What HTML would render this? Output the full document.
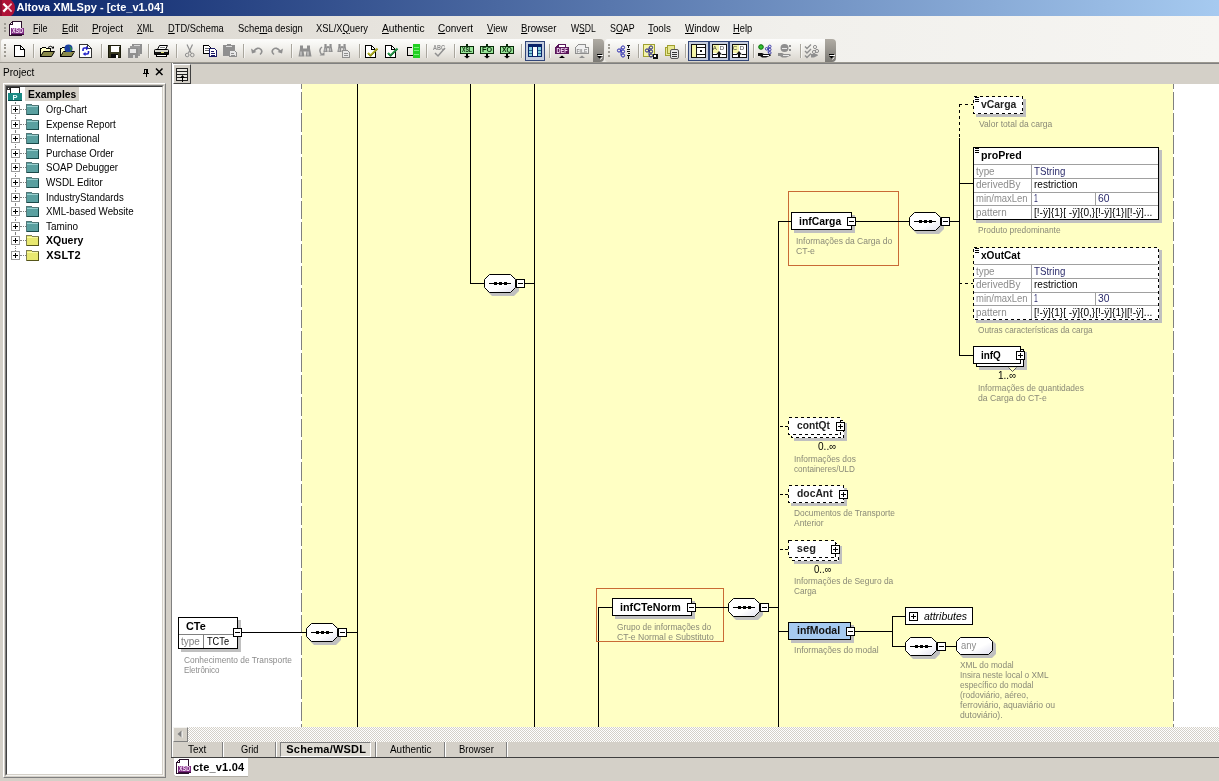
<!DOCTYPE html>
<html lang="en"><head><meta charset="utf-8"><title>Altova XMLSpy - [cte_v1.04]</title>
<style>
html,body{margin:0;padding:0}
body{width:1219px;height:781px;overflow:hidden;position:relative;background:#d4d0c8;font-family:"Liberation Sans",sans-serif;font-size:11px}
#app{position:absolute;left:0;top:0;width:1219px;height:781px;overflow:hidden;will-change:transform}
#app div,#app svg{position:absolute}
.t{position:absolute;white-space:nowrap;transform-origin:0 0}
u{text-decoration:underline;text-underline-offset:1px}
</style></head>
<body>
<div id="app">
<div style="left:0px;top:0px;width:1219px;height:16px;background:linear-gradient(to right,#0a246a 0%,#a6caf0 100%)"></div>
<div style="left:0px;top:16px;width:1219px;height:46px;background:linear-gradient(to right,#d4d0c8 0%,#e6e3dd 30%,#f1f0ec 65%,#f6f5f2 100%)"></div>
<div style="left:0px;top:62px;width:1219px;height:1px;background:#9a978f"></div>
<div style="left:171px;top:63px;width:1048px;height:1px;background:#808080"></div>
<div style="left:1px;top:39px;width:593px;height:23px;background:linear-gradient(to bottom,#fdfdfc 0%,#f3f2ee 35%,#d9d5cd 100%);border-radius:3px 0 0 3px"></div>
<div style="left:593px;top:39px;width:11px;height:23px;background:linear-gradient(to bottom,#b0aca4,#7c7a75);border-radius:0 4px 4px 0"></div>
<div style="left:605px;top:39px;width:221px;height:23px;background:linear-gradient(to bottom,#fdfdfc 0%,#f3f2ee 35%,#d9d5cd 100%);border-radius:3px 0 0 3px"></div>
<div style="left:825px;top:39px;width:11px;height:23px;background:linear-gradient(to bottom,#b0aca4,#7c7a75);border-radius:0 4px 4px 0"></div>
<div style="left:3.5px;top:22.8px;width:2px;height:2px;background:#9d9a92"></div>
<div style="left:3.5px;top:26.5px;width:2px;height:2px;background:#9d9a92"></div>
<div style="left:3.5px;top:30.2px;width:2px;height:2px;background:#9d9a92"></div>
<div style="left:3.5px;top:43.7px;width:2px;height:2px;background:#9d9a92"></div>
<div style="left:3.5px;top:47.4px;width:2px;height:2px;background:#9d9a92"></div>
<div style="left:3.5px;top:51.1px;width:2px;height:2px;background:#9d9a92"></div>
<div style="left:3.5px;top:54.8px;width:2px;height:2px;background:#9d9a92"></div>
<div style="left:608px;top:43.7px;width:2px;height:2px;background:#9d9a92"></div>
<div style="left:608px;top:47.4px;width:2px;height:2px;background:#9d9a92"></div>
<div style="left:608px;top:51.1px;width:2px;height:2px;background:#9d9a92"></div>
<div style="left:608px;top:54.8px;width:2px;height:2px;background:#9d9a92"></div>
<div style="left:33px;top:44px;width:1px;height:14px;background:#a9a69d"></div>
<div style="left:34px;top:45px;width:1px;height:13px;background:rgba(255,255,255,.6)"></div>
<div style="left:101px;top:44px;width:1px;height:14px;background:#a9a69d"></div>
<div style="left:102px;top:45px;width:1px;height:13px;background:rgba(255,255,255,.6)"></div>
<div style="left:148px;top:44px;width:1px;height:14px;background:#a9a69d"></div>
<div style="left:149px;top:45px;width:1px;height:13px;background:rgba(255,255,255,.6)"></div>
<div style="left:176px;top:44px;width:1px;height:14px;background:#a9a69d"></div>
<div style="left:177px;top:45px;width:1px;height:13px;background:rgba(255,255,255,.6)"></div>
<div style="left:243px;top:44px;width:1px;height:14px;background:#a9a69d"></div>
<div style="left:244px;top:45px;width:1px;height:13px;background:rgba(255,255,255,.6)"></div>
<div style="left:291px;top:44px;width:1px;height:14px;background:#a9a69d"></div>
<div style="left:292px;top:45px;width:1px;height:13px;background:rgba(255,255,255,.6)"></div>
<div style="left:359px;top:44px;width:1px;height:14px;background:#a9a69d"></div>
<div style="left:360px;top:45px;width:1px;height:13px;background:rgba(255,255,255,.6)"></div>
<div style="left:426px;top:44px;width:1px;height:14px;background:#a9a69d"></div>
<div style="left:427px;top:45px;width:1px;height:13px;background:rgba(255,255,255,.6)"></div>
<div style="left:454px;top:44px;width:1px;height:14px;background:#a9a69d"></div>
<div style="left:455px;top:45px;width:1px;height:13px;background:rgba(255,255,255,.6)"></div>
<div style="left:521px;top:44px;width:1px;height:14px;background:#a9a69d"></div>
<div style="left:522px;top:45px;width:1px;height:13px;background:rgba(255,255,255,.6)"></div>
<div style="left:549px;top:44px;width:1px;height:14px;background:#a9a69d"></div>
<div style="left:550px;top:45px;width:1px;height:13px;background:rgba(255,255,255,.6)"></div>
<div style="left:638px;top:44px;width:1px;height:14px;background:#a9a69d"></div>
<div style="left:639px;top:45px;width:1px;height:13px;background:rgba(255,255,255,.6)"></div>
<div style="left:685px;top:44px;width:1px;height:14px;background:#a9a69d"></div>
<div style="left:686px;top:45px;width:1px;height:13px;background:rgba(255,255,255,.6)"></div>
<div style="left:753px;top:44px;width:1px;height:14px;background:#a9a69d"></div>
<div style="left:754px;top:45px;width:1px;height:13px;background:rgba(255,255,255,.6)"></div>
<div style="left:800px;top:44px;width:1px;height:14px;background:#a9a69d"></div>
<div style="left:801px;top:45px;width:1px;height:13px;background:rgba(255,255,255,.6)"></div>
<div style="left:3px;top:83px;width:163px;height:695px;border:1px solid #fff;border-right-color:#808080;border-bottom-color:#808080;box-sizing:border-box"></div>
<div style="left:5px;top:85px;width:159px;height:691px;background:#fff;border:1px solid #808080;border-right-color:#f4f3f0;border-bottom-color:#f4f3f0;box-sizing:border-box"></div>
<div style="left:6px;top:86px;width:157px;height:689px;border:1px solid #404040;border-right-color:#d4d0c8;border-bottom-color:#d4d0c8;box-sizing:border-box"></div>
<div style="left:25px;top:87px;width:54px;height:14px;background:#d4d0c8"></div>
<div style="left:15px;top:102px;width:1px;height:14px;border-left:1px dotted #808080"></div>
<div style="left:20px;top:109px;width:6px;height:1px;border-top:1px dotted #808080"></div>
<div style="left:11px;top:105px;width:9px;height:9px;background:#fff;border:1px solid #9a9a9a;box-sizing:border-box"></div>
<div style="left:13px;top:109px;width:5px;height:1px;background:#000"></div>
<div style="left:15px;top:107px;width:1px;height:5px;background:#000"></div>
<div style="left:15px;top:117px;width:1px;height:14px;border-left:1px dotted #808080"></div>
<div style="left:20px;top:124px;width:6px;height:1px;border-top:1px dotted #808080"></div>
<div style="left:11px;top:120px;width:9px;height:9px;background:#fff;border:1px solid #9a9a9a;box-sizing:border-box"></div>
<div style="left:13px;top:124px;width:5px;height:1px;background:#000"></div>
<div style="left:15px;top:122px;width:1px;height:5px;background:#000"></div>
<div style="left:15px;top:131px;width:1px;height:14px;border-left:1px dotted #808080"></div>
<div style="left:20px;top:138px;width:6px;height:1px;border-top:1px dotted #808080"></div>
<div style="left:11px;top:134px;width:9px;height:9px;background:#fff;border:1px solid #9a9a9a;box-sizing:border-box"></div>
<div style="left:13px;top:138px;width:5px;height:1px;background:#000"></div>
<div style="left:15px;top:136px;width:1px;height:5px;background:#000"></div>
<div style="left:15px;top:146px;width:1px;height:14px;border-left:1px dotted #808080"></div>
<div style="left:20px;top:153px;width:6px;height:1px;border-top:1px dotted #808080"></div>
<div style="left:11px;top:149px;width:9px;height:9px;background:#fff;border:1px solid #9a9a9a;box-sizing:border-box"></div>
<div style="left:13px;top:153px;width:5px;height:1px;background:#000"></div>
<div style="left:15px;top:151px;width:1px;height:5px;background:#000"></div>
<div style="left:15px;top:160px;width:1px;height:14px;border-left:1px dotted #808080"></div>
<div style="left:20px;top:167px;width:6px;height:1px;border-top:1px dotted #808080"></div>
<div style="left:11px;top:163px;width:9px;height:9px;background:#fff;border:1px solid #9a9a9a;box-sizing:border-box"></div>
<div style="left:13px;top:167px;width:5px;height:1px;background:#000"></div>
<div style="left:15px;top:165px;width:1px;height:5px;background:#000"></div>
<div style="left:15px;top:175px;width:1px;height:14px;border-left:1px dotted #808080"></div>
<div style="left:20px;top:182px;width:6px;height:1px;border-top:1px dotted #808080"></div>
<div style="left:11px;top:178px;width:9px;height:9px;background:#fff;border:1px solid #9a9a9a;box-sizing:border-box"></div>
<div style="left:13px;top:182px;width:5px;height:1px;background:#000"></div>
<div style="left:15px;top:180px;width:1px;height:5px;background:#000"></div>
<div style="left:15px;top:190px;width:1px;height:14px;border-left:1px dotted #808080"></div>
<div style="left:20px;top:197px;width:6px;height:1px;border-top:1px dotted #808080"></div>
<div style="left:11px;top:193px;width:9px;height:9px;background:#fff;border:1px solid #9a9a9a;box-sizing:border-box"></div>
<div style="left:13px;top:197px;width:5px;height:1px;background:#000"></div>
<div style="left:15px;top:195px;width:1px;height:5px;background:#000"></div>
<div style="left:15px;top:204px;width:1px;height:14px;border-left:1px dotted #808080"></div>
<div style="left:20px;top:211px;width:6px;height:1px;border-top:1px dotted #808080"></div>
<div style="left:11px;top:207px;width:9px;height:9px;background:#fff;border:1px solid #9a9a9a;box-sizing:border-box"></div>
<div style="left:13px;top:211px;width:5px;height:1px;background:#000"></div>
<div style="left:15px;top:209px;width:1px;height:5px;background:#000"></div>
<div style="left:15px;top:219px;width:1px;height:14px;border-left:1px dotted #808080"></div>
<div style="left:20px;top:226px;width:6px;height:1px;border-top:1px dotted #808080"></div>
<div style="left:11px;top:222px;width:9px;height:9px;background:#fff;border:1px solid #9a9a9a;box-sizing:border-box"></div>
<div style="left:13px;top:226px;width:5px;height:1px;background:#000"></div>
<div style="left:15px;top:224px;width:1px;height:5px;background:#000"></div>
<div style="left:15px;top:233px;width:1px;height:14px;border-left:1px dotted #808080"></div>
<div style="left:20px;top:240px;width:6px;height:1px;border-top:1px dotted #808080"></div>
<div style="left:11px;top:236px;width:9px;height:9px;background:#fff;border:1px solid #9a9a9a;box-sizing:border-box"></div>
<div style="left:13px;top:240px;width:5px;height:1px;background:#000"></div>
<div style="left:15px;top:238px;width:1px;height:5px;background:#000"></div>
<div style="left:15px;top:248px;width:1px;height:7px;border-left:1px dotted #808080"></div>
<div style="left:20px;top:255px;width:6px;height:1px;border-top:1px dotted #808080"></div>
<div style="left:11px;top:251px;width:9px;height:9px;background:#fff;border:1px solid #9a9a9a;box-sizing:border-box"></div>
<div style="left:13px;top:255px;width:5px;height:1px;background:#000"></div>
<div style="left:15px;top:253px;width:1px;height:5px;background:#000"></div>
<div style="left:172px;top:84px;width:1047px;height:643px;background:#fff"></div>
<div style="left:171px;top:63px;width:1px;height:695px;background:#808080"></div>
<div style="left:172px;top:63px;width:1px;height:695px;background:#fff"></div>
<div style="left:173px;top:64px;width:18px;height:20px;background:#d4d0c8;border:1px solid #fff;border-right-color:#404040;border-bottom-color:#404040;box-sizing:border-box"></div>
<div style="left:173px;top:727px;width:1046px;height:15px;background:repeating-conic-gradient(#fff 0% 25%,#d4d0c8 0% 50%) 0 0/2px 2px"></div>
<div style="left:173px;top:727px;width:15px;height:15px;background:#d4d0c8;border:1px solid #f4f3f0;border-right-color:#808080;border-bottom-color:#808080;box-sizing:border-box"></div>
<div style="left:173px;top:742px;width:1046px;height:15px;background:#d4d0c8"></div>
<div style="left:171px;top:757px;width:1048px;height:1px;background:#404040"></div>
<div style="left:222px;top:742px;width:1px;height:15px;background:#808080"></div>
<div style="left:223px;top:742px;width:1px;height:15px;background:#fff"></div>
<div style="left:275px;top:742px;width:1px;height:15px;background:#808080"></div>
<div style="left:276px;top:742px;width:1px;height:15px;background:#fff"></div>
<div style="left:375px;top:742px;width:1px;height:15px;background:#808080"></div>
<div style="left:376px;top:742px;width:1px;height:15px;background:#fff"></div>
<div style="left:444px;top:742px;width:1px;height:15px;background:#808080"></div>
<div style="left:445px;top:742px;width:1px;height:15px;background:#fff"></div>
<div style="left:506px;top:742px;width:1px;height:15px;background:#808080"></div>
<div style="left:507px;top:742px;width:1px;height:15px;background:#fff"></div>
<div style="left:280px;top:742px;width:91px;height:15px;border:1px solid #808080;border-right-color:#fff;border-bottom-color:#fff;box-sizing:border-box;background:#dedbd4"></div>
<div style="left:174px;top:758px;width:74px;height:19px;background:#fff;border-radius:0 0 0 3px;border-bottom:1px solid #b0aca4;box-sizing:border-box"></div>
<div style="left:302px;top:84px;width:871px;height:643px;background:#ffffc4"></div>
<svg width="1219" height="781" viewBox="0 0 1219 781" style="left:0;top:0" shape-rendering="crispEdges"><defs><linearGradient id="og" x1="0" y1="0" x2="1" y2="1"><stop offset="0" stop-color="#fff"/><stop offset="0.6" stop-color="#fff"/><stop offset="1" stop-color="#e0e0ee"/></linearGradient></defs><line x1="301.5" y1="84" x2="301.5" y2="727" stroke="#808080" stroke-dasharray="18.8 3" stroke-dashoffset="-7.5"/><line x1="1173.5" y1="84" x2="1173.5" y2="727" stroke="#808080" stroke-dasharray="18.8 3" stroke-dashoffset="-7.5"/><rect x="357" y="84" width="1" height="643" fill="#000"/><rect x="470" y="84" width="1" height="200" fill="#000"/><rect x="534" y="84" width="1" height="643" fill="#000"/><rect x="598" y="607" width="1" height="120" fill="#000"/><rect x="778" y="221" width="1" height="506" fill="#000"/><rect x="959" y="138" width="1" height="218" fill="#000"/><line x1="959.5" y1="104" x2="959.5" y2="138" stroke="#000" stroke-dasharray="3 3" stroke-dashoffset="0"/><rect x="892" y="616" width="1" height="31" fill="#000"/><rect x="181" y="620" width="60" height="32" fill="#c0c0c0"/><rect x="178.5" y="617.5" width="59" height="31" fill="#fff" stroke="#000"/><rect x="179" y="634" width="58" height="1" fill="#808080"/><rect x="203" y="635" width="1" height="13" fill="#808080"/><rect x="238" y="632" width="68" height="1" fill="#000"/><rect x="233.5" y="628.5" width="8" height="8" fill="#fff" stroke="#000"/><rect x="235" y="632" width="5" height="1" fill="#000"/><polygon points="314,626 336,626 341,631 341,640 336,645 314,645 309,640 309,631" fill="#c0c0c0" shape-rendering="auto"/><polygon points="311.5,623.5 332.5,623.5 337.5,628.5 337.5,636.5 332.5,641.5 311.5,641.5 306.5,636.5 306.5,628.5" fill="url(#og)" stroke="#000" shape-rendering="geometricPrecision"/><rect x="311" y="632" width="22" height="1" fill="#000"/><rect x="316" y="631" width="3" height="3" fill="#000"/><rect x="321" y="631" width="3" height="3" fill="#000"/><rect x="326" y="631" width="3" height="3" fill="#000"/><rect x="338.5" y="628.5" width="8" height="8" fill="#fff" stroke="#000"/><rect x="340" y="632" width="5" height="1" fill="#000"/><rect x="347" y="632" width="10" height="1" fill="#000"/><rect x="470" y="283" width="14" height="1" fill="#000"/><polygon points="492,277 514,277 519,282 519,291 514,296 492,296 487,291 487,282" fill="#c0c0c0" shape-rendering="auto"/><polygon points="489.5,274.5 510.5,274.5 515.5,279.5 515.5,287.5 510.5,292.5 489.5,292.5 484.5,287.5 484.5,279.5" fill="url(#og)" stroke="#000" shape-rendering="geometricPrecision"/><rect x="489" y="283" width="22" height="1" fill="#000"/><rect x="494" y="282" width="3" height="3" fill="#000"/><rect x="499" y="282" width="3" height="3" fill="#000"/><rect x="504" y="282" width="3" height="3" fill="#000"/><rect x="516.5" y="279.5" width="8" height="8" fill="#fff" stroke="#000"/><rect x="518" y="283" width="5" height="1" fill="#000"/><rect x="525" y="283" width="9" height="1" fill="#000"/><rect x="596.5" y="588.5" width="127" height="53" fill="none" stroke="#c96a35"/><rect x="598" y="607" width="14" height="1" fill="#000"/><rect x="615" y="601" width="80" height="18" fill="#c0c0c0"/><rect x="612.5" y="598.5" width="79" height="17" fill="#fff" stroke="#000"/><rect x="692" y="607" width="36" height="1" fill="#000"/><rect x="687.5" y="603.5" width="8" height="8" fill="#fff" stroke="#000"/><rect x="689" y="607" width="5" height="1" fill="#000"/><polygon points="736,601 758,601 763,606 763,615 758,620 736,620 731,615 731,606" fill="#c0c0c0" shape-rendering="auto"/><polygon points="733.5,598.5 754.5,598.5 759.5,603.5 759.5,611.5 754.5,616.5 733.5,616.5 728.5,611.5 728.5,603.5" fill="url(#og)" stroke="#000" shape-rendering="geometricPrecision"/><rect x="733" y="607" width="22" height="1" fill="#000"/><rect x="738" y="606" width="3" height="3" fill="#000"/><rect x="743" y="606" width="3" height="3" fill="#000"/><rect x="748" y="606" width="3" height="3" fill="#000"/><rect x="760.5" y="603.5" width="8" height="8" fill="#fff" stroke="#000"/><rect x="762" y="607" width="5" height="1" fill="#000"/><rect x="769" y="607" width="9" height="1" fill="#000"/><rect x="788.5" y="191.5" width="110" height="74" fill="none" stroke="#c96a35"/><rect x="778" y="221" width="13" height="1" fill="#000"/><rect x="794" y="215" width="61" height="18" fill="#c0c0c0"/><rect x="791.5" y="212.5" width="60" height="17" fill="#fff" stroke="#000"/><rect x="852" y="221" width="57" height="1" fill="#000"/><rect x="847.5" y="217.5" width="8" height="8" fill="#fff" stroke="#000"/><rect x="849" y="221" width="5" height="1" fill="#000"/><polygon points="917,215 939,215 944,220 944,229 939,234 917,234 912,229 912,220" fill="#c0c0c0" shape-rendering="auto"/><polygon points="914.5,212.5 935.5,212.5 940.5,217.5 940.5,225.5 935.5,230.5 914.5,230.5 909.5,225.5 909.5,217.5" fill="url(#og)" stroke="#000" shape-rendering="geometricPrecision"/><rect x="914" y="221" width="22" height="1" fill="#000"/><rect x="919" y="220" width="3" height="3" fill="#000"/><rect x="924" y="220" width="3" height="3" fill="#000"/><rect x="929" y="220" width="3" height="3" fill="#000"/><rect x="941.5" y="217.5" width="8" height="8" fill="#fff" stroke="#000"/><rect x="943" y="221" width="5" height="1" fill="#000"/><rect x="950" y="221" width="9" height="1" fill="#000"/><line x1="959" y1="104.5" x2="973" y2="104.5" stroke="#000" stroke-dasharray="3 3"/><rect x="976" y="99" width="50" height="18" fill="#c0c0c0"/><rect x="973.5" y="96.5" width="49" height="17" fill="#fff" stroke="#000" stroke-dasharray="3 3"/><rect x="975" y="97" width="4" height="1" fill="#000"/><rect x="975" y="99" width="4" height="1" fill="#000"/><rect x="975" y="101" width="4" height="1" fill="#000"/><rect x="959" y="183" width="14" height="1" fill="#000"/><rect x="976" y="150" width="186" height="73" fill="#c0c0c0"/><rect x="973.5" y="147.5" width="185" height="72" fill="#fff" stroke="#000"/><rect x="974" y="164" width="184" height="1" fill="#a0a0a0"/><rect x="974" y="178" width="184" height="1" fill="#a0a0a0"/><rect x="974" y="192" width="184" height="1" fill="#a0a0a0"/><rect x="974" y="205" width="184" height="1" fill="#a0a0a0"/><rect x="1031" y="165" width="1" height="54" fill="#a0a0a0"/><rect x="1095" y="193" width="1" height="12" fill="#a0a0a0"/><rect x="975" y="148" width="4" height="1" fill="#000"/><rect x="975" y="150" width="4" height="1" fill="#000"/><rect x="975" y="152" width="4" height="1" fill="#000"/><line x1="959" y1="283.5" x2="973" y2="283.5" stroke="#000" stroke-dasharray="3 3"/><rect x="976" y="250" width="186" height="73" fill="#c0c0c0"/><rect x="973.5" y="247.5" width="185" height="72" fill="#fff" stroke="#000" stroke-dasharray="3 3"/><rect x="974" y="264" width="184" height="1" fill="#a0a0a0"/><rect x="974" y="278" width="184" height="1" fill="#a0a0a0"/><rect x="974" y="292" width="184" height="1" fill="#a0a0a0"/><rect x="974" y="305" width="184" height="1" fill="#a0a0a0"/><rect x="1031" y="265" width="1" height="54" fill="#a0a0a0"/><rect x="1095" y="293" width="1" height="12" fill="#a0a0a0"/><rect x="975" y="248" width="4" height="1" fill="#000"/><rect x="975" y="250" width="4" height="1" fill="#000"/><rect x="975" y="252" width="4" height="1" fill="#000"/><rect x="959" y="355" width="14" height="1" fill="#000"/><rect x="979" y="352" width="48" height="18" fill="#c0c0c0"/><rect x="976.5" y="349.5" width="47" height="17" fill="#fff" stroke="#000"/><rect x="973.5" y="346.5" width="47" height="17" fill="#fff" stroke="#000"/><rect x="1016.5" y="351.5" width="8" height="8" fill="#fff" stroke="#000"/><rect x="1018" y="355" width="5" height="1" fill="#000"/><rect x="1020" y="353" width="1" height="5" fill="#000"/><path d="M1008.5 367.5 L1012.5 371.5 L1016.5 367.5" fill="#ffffc4" stroke="#555" stroke-width="1" shape-rendering="auto"/><line x1="780" y1="426.5" x2="788" y2="426.5" stroke="#000" stroke-dasharray="3 2"/><rect x="794" y="423" width="53" height="18" fill="#c0c0c0"/><rect x="791.5" y="420.5" width="52" height="17" fill="#fff" stroke="#000" stroke-dasharray="3 3"/><rect x="788.5" y="417.5" width="52" height="17" fill="#fff" stroke="#000" stroke-dasharray="3 3"/><rect x="836.5" y="422.5" width="8" height="8" fill="#fff" stroke="#000"/><rect x="838" y="426" width="5" height="1" fill="#000"/><rect x="840" y="424" width="1" height="5" fill="#000"/><line x1="780" y1="494.5" x2="788" y2="494.5" stroke="#000" stroke-dasharray="3 2"/><rect x="791" y="488" width="56" height="18" fill="#c0c0c0"/><rect x="788.5" y="485.5" width="55" height="17" fill="#fff" stroke="#000" stroke-dasharray="3 3"/><rect x="839.5" y="490.5" width="8" height="8" fill="#fff" stroke="#000"/><rect x="841" y="494" width="5" height="1" fill="#000"/><rect x="843" y="492" width="1" height="5" fill="#000"/><line x1="780" y1="549.5" x2="788" y2="549.5" stroke="#000" stroke-dasharray="3 2"/><rect x="794" y="546" width="48" height="18" fill="#c0c0c0"/><rect x="791.5" y="543.5" width="47" height="17" fill="#fff" stroke="#000" stroke-dasharray="3 3"/><rect x="788.5" y="540.5" width="47" height="17" fill="#fff" stroke="#000" stroke-dasharray="3 3"/><rect x="831.5" y="545.5" width="8" height="8" fill="#fff" stroke="#000"/><rect x="833" y="549" width="5" height="1" fill="#000"/><rect x="835" y="547" width="1" height="5" fill="#000"/><rect x="778" y="631" width="10" height="1" fill="#000"/><rect x="791" y="625" width="63" height="18" fill="#c0c0c0"/><rect x="788.5" y="622.5" width="62" height="17" fill="#a6caf0" stroke="#000"/><rect x="851" y="631" width="41" height="1" fill="#000"/><rect x="846.5" y="627.5" width="8" height="8" fill="#fff" stroke="#000"/><rect x="848" y="631" width="5" height="1" fill="#000"/><rect x="892" y="616" width="13" height="1" fill="#000"/><rect x="892" y="646" width="13" height="1" fill="#000"/><rect x="905.5" y="607.5" width="67" height="17" fill="#fff" stroke="#000"/><rect x="909.5" y="612.5" width="8" height="8" fill="#fff" stroke="#000"/><rect x="911" y="616" width="5" height="1" fill="#000"/><rect x="913" y="614" width="1" height="5" fill="#000"/><polygon points="913,640 935,640 940,645 940,654 935,659 913,659 908,654 908,645" fill="#c0c0c0" shape-rendering="auto"/><polygon points="910.5,637.5 931.5,637.5 936.5,642.5 936.5,650.5 931.5,655.5 910.5,655.5 905.5,650.5 905.5,642.5" fill="url(#og)" stroke="#000" shape-rendering="geometricPrecision"/><rect x="910" y="646" width="22" height="1" fill="#000"/><rect x="915" y="645" width="3" height="3" fill="#000"/><rect x="920" y="645" width="3" height="3" fill="#000"/><rect x="925" y="645" width="3" height="3" fill="#000"/><rect x="937.5" y="642.5" width="8" height="8" fill="#fff" stroke="#000"/><rect x="939" y="646" width="5" height="1" fill="#000"/><rect x="946" y="646" width="10" height="1" fill="#000"/><polygon points="963,640 992,640 996,644 996,654 992,658 963,658 959,654 959,644" fill="#c0c0c0" shape-rendering="auto"/><polygon points="960.5,637.5 988.5,637.5 992.5,641.5 992.5,650.5 988.5,654.5 960.5,654.5 956.5,650.5 956.5,641.5" fill="url(#og)" stroke="#000" shape-rendering="geometricPrecision"/></svg>
<svg width="1219" height="781" viewBox="0 0 1219 781" style="left:0;top:0" shape-rendering="crispEdges"><g transform="translate(0 0)"><path d="M0 0H11Q15 3 15 8Q15 13 11 16H0Z" fill="#b01236" shape-rendering="auto"/><rect x="0" y="0" width="1.5" height="16" fill="#7a0c2c" opacity=".7"/><path d="M3.3 3.6L7.4 7.6L3.3 11.6" stroke="#fff" stroke-width="2.2" fill="none" stroke-linejoin="miter" shape-rendering="auto"/><path d="M11.6 3.6L7.9 7.6L11.6 11.6" stroke="#f6c8d2" stroke-width="1.6" fill="none" shape-rendering="auto"/></g><g transform="translate(9 21)"><path d="M0.5 3.5L3.5 0.5H12.5V14.5H0.5Z" fill="#fff" stroke="#2a102a"/><path d="M0.5 3.5H3.5V0.5" fill="none" stroke="#2a102a"/><rect x="2" y="6.5" width="13" height="6.5" fill="#7c2a80"/><rect x="2" y="12.5" width="13" height="1" fill="#3a0c3c"/><text x="8.5" y="12" font-family="Liberation Sans, sans-serif" font-size="6.5" font-weight="bold" fill="#fbe6fb" text-anchor="middle" textLength="11" lengthAdjust="spacingAndGlyphs">XSD</text></g><g transform="translate(176 759)"><path d="M0.5 3.5L3.5 0.5H12.5V14.5H0.5Z" fill="#fff" stroke="#2a102a"/><path d="M0.5 3.5H3.5V0.5" fill="none" stroke="#2a102a"/><rect x="2" y="6.5" width="13" height="6.5" fill="#7c2a80"/><rect x="2" y="12.5" width="13" height="1" fill="#3a0c3c"/><text x="8.5" y="12" font-family="Liberation Sans, sans-serif" font-size="6.5" font-weight="bold" fill="#fbe6fb" text-anchor="middle" textLength="11" lengthAdjust="spacingAndGlyphs">XSD</text></g><g transform="translate(14 45)"><path d="M0.5 0.5H6.5L10.5 4.5V11.5H0.5Z" fill="#fff" stroke="#000"/><path d="M6.5 0.5V4.5H10.5" fill="none" stroke="#000"/></g><g transform="translate(40 45)"><path d="M0.5 11.5V3.5H1.5L2.5 2.5H5.5L6.5 3.5H10.5V6.5" fill="#ffffc8" stroke="#000"/><path d="M1 7H10V11H1Z" fill="#ffffc8"/><path d="M0.5 11.5L3.5 6.5H14.5L11.5 11.5Z" fill="#8a8a4a" stroke="#000" shape-rendering="auto"/><path d="M8 2.5Q10.5 0 13 2.5" fill="none" stroke="#000" shape-rendering="auto"/><path d="M11.5 3.5H14V1Z" fill="#000" shape-rendering="auto"/></g><g transform="translate(60 45)"><path d="M0.5 11.5V3.5H1.5L2.5 2.5H5.5L6.5 3.5H10.5V6.5" fill="#ffffc8" stroke="#000"/><path d="M1 7H10V11H1Z" fill="#ffffc8"/><path d="M0.5 11.5L3.5 6.5H14.5L11.5 11.5Z" fill="#8a8a4a" stroke="#000" shape-rendering="auto"/><circle cx="8.5" cy="3.5" r="4" fill="#1a3fa0" shape-rendering="auto"/><path d="M9 0.5Q12 1.5 12 5L10 6Q11 3 9 0.5Z" fill="#2a8a4a" shape-rendering="auto"/><path d="M3 6.5H14.5L13 8H3Z" fill="#8a8a4a"/></g><g transform="translate(79 44)"><path d="M0.5 0.5H8.5L12.5 4.5V13.5H0.5Z" fill="#fff" stroke="#333"/><path d="M8.5 0.5V4.5H12.5" fill="none" stroke="#333"/><path d="M4 7V5.5Q4 4 5.5 4H8" fill="none" stroke="#2222c8" stroke-width="1.6" shape-rendering="auto"/><path d="M7 2L9.8 4.2L7 6.2Z" fill="#2222c8" shape-rendering="auto"/><path d="M9.5 7V8.5Q9.5 10 8 10H5.5" fill="none" stroke="#2222c8" stroke-width="1.6" shape-rendering="auto"/><path d="M6.5 8L3.7 10L6.5 12Z" fill="#2222c8" shape-rendering="auto"/></g><g transform="translate(108 45)"><rect x="0" y="0" width="13" height="13" fill="#1a1a0a"/><rect x="1" y="1" width="11" height="11" fill="#3a3a22"/><rect x="3" y="1" width="8" height="6" fill="#fff"/><rect x="3" y="9" width="7" height="4" fill="#0a0a0a"/><rect x="8" y="10" width="2" height="3" fill="#fff"/><rect x="11" y="1" width="1" height="1" fill="#aaa"/></g><g transform="translate(128 44)"><rect x="4" y="0" width="10" height="10" fill="#8f8f8f"/><rect x="2" y="2" width="10" height="10" fill="#9a9a9a"/><rect x="0" y="4" width="10" height="10" fill="#8f8f8f"/><rect x="2" y="5" width="6" height="4" fill="#e8e8e8"/><rect x="6" y="1" width="6" height="1" fill="#d8d8d8"/><rect x="5" y="11" width="2" height="3" fill="#d8d8d8"/></g><g transform="translate(154 45)"><path d="M3.5 4.5L5.5 0.5H13.5L11.5 4.5Z" fill="#fff" stroke="#000" shape-rendering="auto"/><rect x="6" y="2" width="5" height="1" fill="#888"/><path d="M0.5 5.5Q0.5 4.5 1.5 4.5H13.5Q14.5 4.5 14.5 5.5V9.5H0.5Z" fill="#d8d8d0" stroke="#000" shape-rendering="auto"/><rect x="1" y="7" width="13" height="2" fill="#111"/><rect x="7" y="7" width="3" height="1" fill="#e0e070"/><rect x="2.5" y="9.5" width="10" height="2" fill="#fff" stroke="#000"/><rect x="2" y="11" width="11" height="1" fill="#000"/></g><g transform="translate(185 44)"><path d="M2 0.5L6 9M7.5 0.5L3.5 9" stroke="#8f8f8f" stroke-width="1.2" fill="none" shape-rendering="auto"/><circle cx="2.2" cy="11" r="1.8" fill="none" stroke="#8f8f8f" shape-rendering="auto"/><circle cx="7.3" cy="11" r="1.8" fill="none" stroke="#8f8f8f" shape-rendering="auto"/></g><g transform="translate(203 45)"><path d="M0.5 0.5H5.5L7.5 2.5V8.5H0.5Z" fill="#fff" stroke="#000"/><rect x="2" y="3" width="4" height="1" fill="#666"/><rect x="2" y="5" width="4" height="1" fill="#666"/><path d="M6.5 3.5H11.5L13.5 5.5V11.5H6.5Z" fill="#fff" stroke="#1a1a66"/><rect x="8" y="6" width="3" height="1" fill="#1a1a66"/><rect x="8" y="8" width="4" height="1" fill="#1a1a66"/><rect x="8" y="10" width="4" height="1" fill="#1a1a66"/></g><g transform="translate(223 44)"><rect x="0" y="1" width="12" height="11" rx="1" fill="#8f8f8f"/><rect x="4" y="0" width="4" height="2" fill="#8f8f8f"/><rect x="3" y="2" width="6" height="1" fill="#ddd"/><path d="M6.5 6.5H11.5L13.5 8.5V12.5H6.5Z" fill="#e8e8e8" stroke="#8f8f8f"/><rect x="8" y="9" width="3" height="1" fill="#8f8f8f"/><rect x="8" y="11" width="4" height="1" fill="#8f8f8f"/></g><g transform="translate(251 47)"><path d="M3 4Q6.5 -0.5 10 2.5Q12 5 9 7.5" fill="none" stroke="#8f8f8f" stroke-width="1.6" shape-rendering="auto"/><path d="M0 1.5L1 6.5L5.5 5Z" fill="#8f8f8f" shape-rendering="auto"/></g><g transform="translate(283 47)"><g transform="scale(-1 1)"><path d="M3 4Q6.5 -0.5 10 2.5Q12 5 9 7.5" fill="none" stroke="#8f8f8f" stroke-width="1.6" shape-rendering="auto"/><path d="M0 1.5L1 6.5L5.5 5Z" fill="#8f8f8f" shape-rendering="auto"/></g></g><g transform="translate(298 45.5)"><g transform="scale(1.0)" shape-rendering="auto"><path d="M2 0H5V3L6.5 11H0.5L2 3Z" fill="#8f8f8f"/><path d="M9 0H12V3L13.5 11H7.5L9 3Z" fill="#8f8f8f"/><rect x="5" y="3" width="4" height="3" fill="#8f8f8f"/><rect x="2.5" y="6" width="1" height="4" fill="#ddd"/><rect x="9.5" y="6" width="1" height="4" fill="#ddd"/></g></g><g transform="translate(323 44)"><g transform="scale(0.72)" shape-rendering="auto"><path d="M2 0H5V3L6.5 11H0.5L2 3Z" fill="#8f8f8f"/><path d="M9 0H12V3L13.5 11H7.5L9 3Z" fill="#8f8f8f"/><rect x="5" y="3" width="4" height="3" fill="#8f8f8f"/><rect x="2.5" y="6" width="1" height="4" fill="#ddd"/><rect x="9.5" y="6" width="1" height="4" fill="#ddd"/></g><path d="M-1 3Q-5 6 -1.5 10.5" fill="none" stroke="#8f8f8f" stroke-width="1.5" shape-rendering="auto"/><path d="M-3.5 11.5H1.5V8Z" fill="#8f8f8f" shape-rendering="auto"/></g><g transform="translate(337 44)"><g transform="scale(0.72)" shape-rendering="auto"><path d="M2 0H5V3L6.5 11H0.5L2 3Z" fill="#8f8f8f"/><path d="M9 0H12V3L13.5 11H7.5L9 3Z" fill="#8f8f8f"/><rect x="5" y="3" width="4" height="3" fill="#8f8f8f"/><rect x="2.5" y="6" width="1" height="4" fill="#ddd"/><rect x="9.5" y="6" width="1" height="4" fill="#ddd"/></g><path d="M5.5 6.5H10.5L12.5 8.5V13.5H5.5Z" fill="#e8e8e8" stroke="#8f8f8f"/><rect x="7" y="9" width="4" height="1" fill="#8f8f8f"/><rect x="7" y="11" width="4" height="1" fill="#8f8f8f"/></g><g transform="translate(365 45)"><path d="M0.5 0.5H6.5L10.5 4.5V12.5H0.5Z" fill="#fff" stroke="#000"/><path d="M6.5 0.5V4.5H10.5" fill="none" stroke="#000"/><path d="M3 8L5.5 10.5L12.5 3.5" fill="none" stroke="#b4b424" stroke-width="2" shape-rendering="auto"/><path d="M3 8.7L5.5 11.2L12.5 4.2" fill="none" stroke="#6a6a10" stroke-width="0.8" shape-rendering="auto"/></g><g transform="translate(385 45)"><path d="M0.5 0.5H6.5L10.5 4.5V12.5H0.5Z" fill="#fff" stroke="#000"/><path d="M6.5 0.5V4.5H10.5" fill="none" stroke="#000"/><path d="M3 8L5.5 10.5L12.5 3.5" fill="none" stroke="#2a9a4a" stroke-width="2" shape-rendering="auto"/><path d="M3 8.7L5.5 11.2L12.5 4.2" fill="none" stroke="#0a5a2a" stroke-width="0.8" shape-rendering="auto"/></g><g transform="translate(407 44)"><path d="M3.5 3.5H0.5V11.5H5.5" fill="none" stroke="#000"/><rect x="3" y="3" width="2" height="1" fill="#000"/><rect x="6" y="0" width="7" height="14" rx="1" fill="#22d022"/><rect x="7" y="3" width="5" height="1" fill="#7af07a"/><rect x="7" y="6" width="5" height="1" fill="#7af07a"/><rect x="7" y="10" width="5" height="1" fill="#7af07a"/></g><g transform="translate(433 45)"><text x="0" y="5" font-family="Liberation Sans, sans-serif" font-size="6.5" font-weight="bold" fill="#8f8f8f" text-anchor="start" textLength="12" lengthAdjust="spacingAndGlyphs">ABC</text><path d="M2 8L5 11L12 3" fill="none" stroke="#8f8f8f" stroke-width="1.5" shape-rendering="auto"/></g><g transform="translate(460 44)"><rect x="6" y="0" width="2" height="3" fill="#0a2a0a"/><rect x="0.5" y="2.5" width="13" height="7" fill="#9ae89a" stroke="#0a2a0a"/><rect x="1" y="9" width="13" height="1" fill="#0a2a0a"/><text x="7" y="8.3" font-family="Liberation Sans, sans-serif" font-size="6.5" font-weight="bold" fill="#0a2a0a" text-anchor="middle" textLength="10" lengthAdjust="spacingAndGlyphs">XSL</text><rect x="6" y="10" width="2" height="2" fill="#000"/><path d="M4 12H10L7 14.5Z" fill="#000" shape-rendering="auto"/></g><g transform="translate(480 44)"><rect x="6" y="0" width="2" height="3" fill="#0a2a0a"/><rect x="0.5" y="2.5" width="13" height="7" fill="#9ae89a" stroke="#0a2a0a"/><rect x="1" y="9" width="13" height="1" fill="#0a2a0a"/><text x="7" y="8.3" font-family="Liberation Sans, sans-serif" font-size="6.5" font-weight="bold" fill="#0a2a0a" text-anchor="middle" textLength="10" lengthAdjust="spacingAndGlyphs">FO</text><rect x="6" y="10" width="2" height="2" fill="#000"/><path d="M4 12H10L7 14.5Z" fill="#000" shape-rendering="auto"/></g><g transform="translate(500 44)"><rect x="6" y="0" width="2" height="3" fill="#0a2a0a"/><rect x="0.5" y="2.5" width="13" height="7" fill="#9ae89a" stroke="#0a2a0a"/><rect x="1" y="9" width="13" height="1" fill="#0a2a0a"/><text x="7" y="8.3" font-family="Liberation Sans, sans-serif" font-size="6.5" font-weight="bold" fill="#0a2a0a" text-anchor="middle" textLength="10" lengthAdjust="spacingAndGlyphs">XQ</text><rect x="6" y="10" width="2" height="2" fill="#000"/><path d="M4 12H10L7 14.5Z" fill="#000" shape-rendering="auto"/></g><rect x="525.5" y="41.5" width="19" height="19" fill="#c6cede" stroke="#33477a"/><g transform="translate(528 44)"><rect x="0" y="0" width="14" height="13" fill="#0a246a"/><rect x="1" y="3" width="3" height="9" fill="#8ad0e0"/><rect x="5" y="3" width="4" height="9" fill="#fff"/><rect x="10" y="3" width="3" height="9" fill="#8ad0e0"/><rect x="1" y="6" width="3" height="1" fill="#2a6a8a"/><rect x="1" y="9" width="3" height="1" fill="#2a6a8a"/><rect x="10" y="6" width="3" height="1" fill="#2a6a8a"/><rect x="10" y="9" width="3" height="1" fill="#2a6a8a"/></g><g transform="translate(555 44)"><path d="M0 3L3 0H11V3H14V10H0Z" fill="#5a165a"/><rect x="4" y="1" width="6" height="2" fill="#fff"/><text x="7" y="8.7" font-family="Liberation Sans, sans-serif" font-size="6.5" font-weight="bold" fill="#f6d8f6" text-anchor="middle" textLength="11" lengthAdjust="spacingAndGlyphs">DEF</text><path d="M4 14H10L7 11.5Z" fill="#000" shape-rendering="auto"/></g><g transform="translate(575 44)"><path d="M0.5 3.5L3.5 0.5H10.5V3.5H13.5V9.5H0.5Z" fill="#f0f0f0" stroke="#8f8f8f"/><text x="7" y="8.5" font-family="Liberation Sans, sans-serif" font-size="6" font-weight="bold" fill="#8f8f8f" text-anchor="middle" textLength="11" lengthAdjust="spacingAndGlyphs">FILE</text><path d="M4 14H10L7 11.5Z" fill="#8f8f8f" shape-rendering="auto"/></g><rect x="597" y="54" width="5" height="1" fill="#000"/><path d="M597 56H602L599.5 58.5Z" fill="#000" shape-rendering="auto"/><rect x="598" y="55" width="5" height="1" fill="#fff"/><path d="M602 57.5L600.5 59.5" stroke="#fff" shape-rendering="auto"/><rect x="829" y="54" width="5" height="1" fill="#000"/><path d="M829 56H834L831.5 58.5Z" fill="#000" shape-rendering="auto"/><rect x="830" y="55" width="5" height="1" fill="#fff"/><path d="M834 57.5L832.5 59.5" stroke="#fff" shape-rendering="auto"/><g transform="translate(617 44.5)"><g fill="none" stroke="#2a2ab0" shape-rendering="auto"><circle cx="2" cy="6" r="1.6"/><circle cx="6" cy="3" r="1.6"/><circle cx="6" cy="7" r="1.6"/><circle cx="6" cy="11" r="1.6"/><path d="M3.5 6H4.5M4 3V11"/></g><g fill="#111"><rect x="10" y="0" width="3" height="1"/><rect x="11" y="1" width="1" height="2"/><rect x="10" y="4" width="3" height="1"/><rect x="10" y="6" width="3" height="1"/><rect x="11" y="8" width="2" height="1"/><rect x="10" y="10" width="3" height="1"/><rect x="11" y="11" width="1" height="3"/></g></g><g transform="translate(643 44)"><rect x="0.5" y="0.5" width="11" height="12" fill="#f4f4a8" stroke="#a0a030"/><g transform="translate(2 0.5)"><g fill="none" stroke="#20208a" shape-rendering="auto"><circle cx="2" cy="6" r="1.6"/><circle cx="6" cy="3" r="1.6"/><circle cx="6" cy="7" r="1.6"/><circle cx="6" cy="11" r="1.6"/><path d="M3.5 6H4.5M4 3V11"/></g></g><rect x="10" y="10" width="5" height="5" fill="#111"/><rect x="11" y="11" width="2" height="2" fill="#fff"/></g><g transform="translate(665 45)"><rect x="0.5" y="2.5" width="7" height="8" fill="#e8e890" stroke="#a0a030"/><rect x="2.5" y="0.5" width="7" height="8" fill="#e8e890" stroke="#a0a030"/><rect x="5.5" y="4.5" width="8" height="9" rx="1.5" fill="#e8e8e8" stroke="#555" shape-rendering="auto"/><rect x="7" y="7" width="5" height="1" fill="#333"/><rect x="7" y="9" width="5" height="1" fill="#333"/><rect x="7" y="11" width="5" height="1" fill="#333"/></g><rect x="688.5" y="41.5" width="20" height="19" fill="#c6cede" stroke="#33477a"/><rect x="709.5" y="41.5" width="19" height="19" fill="#c6cede" stroke="#33477a"/><rect x="729.5" y="41.5" width="19" height="19" fill="#c6cede" stroke="#33477a"/><g transform="translate(691 44)"><rect x="0.5" y="0.5" width="14" height="13" fill="#fff" stroke="#111"/><rect x="1" y="1" width="4" height="12" fill="#f4f4a8"/><rect x="5" y="1" width="1" height="12" fill="#111"/><rect x="6" y="3" width="8" height="1" fill="#111"/><rect x="6" y="10" width="8" height="1" fill="#111"/><rect x="9" y="6" width="2" height="2" fill="#111"/></g><g transform="translate(711.5 44)"><rect x="0.5" y="0.5" width="14" height="13" fill="#fff" stroke="#111"/><rect x="1" y="1" width="6" height="8" fill="#f4f4a8"/><text x="1.3" y="6.3" font-family="Liberation Sans, sans-serif" font-size="6" font-weight="normal" fill="#333" text-anchor="start">A</text><text x="8.3" y="6.3" font-family="Liberation Sans, sans-serif" font-size="6" font-weight="normal" fill="#333" text-anchor="start">D</text><rect x="1" y="10" width="4" height="1" fill="#111"/><rect x="10" y="10" width="4" height="1" fill="#111"/><path d="M4.5 10.5L7.5 7L10.5 10.5Z" fill="#111" shape-rendering="auto"/><rect x="6.5" y="10" width="2" height="3" fill="#111"/></g><g transform="translate(731.5 44)"><rect x="0.5" y="0.5" width="14" height="13" fill="#fff" stroke="#111"/><rect x="1" y="1" width="6" height="8" fill="#f4f4a8"/><text x="1.3" y="6.3" font-family="Liberation Sans, sans-serif" font-size="6" font-weight="normal" fill="#333" text-anchor="start">C</text><text x="8.3" y="6.3" font-family="Liberation Sans, sans-serif" font-size="6" font-weight="normal" fill="#333" text-anchor="start">D</text><rect x="1" y="10" width="4" height="1" fill="#111"/><rect x="10" y="10" width="4" height="1" fill="#111"/><path d="M4.5 10.5L7.5 7L10.5 10.5Z" fill="#111" shape-rendering="auto"/><rect x="6.5" y="10" width="2" height="3" fill="#111"/></g><g transform="translate(758 44)"><circle cx="3" cy="3" r="2.3" fill="#30c030" stroke="#0a6a0a" shape-rendering="auto"/><g transform="translate(7 0) scale(0.8)"><g fill="none" stroke="#2020a0" shape-rendering="auto"><circle cx="2" cy="6" r="1.6"/><circle cx="6" cy="3" r="1.6"/><circle cx="6" cy="7" r="1.6"/><circle cx="6" cy="11" r="1.6"/><path d="M3.5 6H4.5M4 3V11"/></g></g><path d="M0 9H4L6 10H11Q13 10 13 11.5L8 13.5H4L2 12H0Z" fill="#111" shape-rendering="auto"/><rect x="5" y="11" width="6" height="1" fill="#fff"/></g><g transform="translate(778 44)"><circle cx="6.5" cy="4" r="4" fill="#8f8f8f" shape-rendering="auto"/><rect x="4" y="3.5" width="5" height="1.5" fill="#e8e8e8"/><rect x="11" y="1" width="2" height="2" fill="#8f8f8f"/><rect x="11" y="5" width="2" height="2" fill="#8f8f8f"/><path d="M0 9H4L6 10H11Q13 10 13 11.5L8 13.5H4L2 12H0Z" fill="#8f8f8f" shape-rendering="auto"/><rect x="5" y="11" width="6" height="1" fill="#e8e8e8"/></g><g transform="translate(805 44)"><g fill="none" stroke="#8f8f8f" stroke-width="1.4" shape-rendering="auto"><path d="M0 2.5L2 4.5L6 0.5"/><path d="M0 7L2 9L6 5"/><path d="M0 11.5L2 13.5L6 9.5"/></g><g fill="none" stroke="#8f8f8f" shape-rendering="auto"><circle cx="10" cy="3" r="1.6"/><circle cx="12" cy="7" r="1.6"/><circle cx="9" cy="8" r="1.6"/></g><path d="M6 10H11Q13 10 13 11.5L9 13.5H6Z" fill="#8f8f8f" shape-rendering="auto"/></g><g transform="translate(143 69)"><rect x="1" y="0" width="4" height="1" fill="#000"/><rect x="1" y="1" width="1" height="3" fill="#000"/><rect x="3" y="1" width="2" height="3" fill="#000"/><rect x="0" y="4" width="6" height="1" fill="#000"/><rect x="2.5" y="5" width="1" height="2.5" fill="#000"/></g><g transform="translate(155 68)"><path d="M1 0.5L7.5 7M7.5 0.5L1 7" stroke="#000" stroke-width="1.5" shape-rendering="auto"/></g><g transform="translate(7 87)"><rect x="3.5" y="0.5" width="9" height="8" fill="#fff" stroke="#222"/><rect x="0" y="0" width="3" height="3" fill="#333"/><rect x="1" y="1" width="1" height="1" fill="#fff"/><rect x="1" y="6" width="14" height="8" rx="1" fill="#1a8a84"/><rect x="1" y="13" width="14" height="1" fill="#0a4a48"/><text x="8" y="13" font-family="Liberation Sans, sans-serif" font-size="7.5" font-weight="bold" fill="#e8ffff" text-anchor="middle">P</text></g><g transform="translate(26 103)"><path d="M0 2Q0 0.5 1.5 0.5H5L6.5 2H13V12H0Z" fill="#1a4a4a" opacity=".75"/><path d="M1 2.2Q1 1.5 2 1.5H4.7L6.2 3H12V11H1Z" fill="#5aa0a0"/><rect x="1" y="3" width="11" height="1" fill="#9ad0d0"/><rect x="1" y="11" width="12" height="1" fill="#1a4a4a"/><rect x="12" y="3" width="1" height="9" fill="#1a4a4a"/></g><g transform="translate(26 118)"><path d="M0 2Q0 0.5 1.5 0.5H5L6.5 2H13V12H0Z" fill="#1a4a4a" opacity=".75"/><path d="M1 2.2Q1 1.5 2 1.5H4.7L6.2 3H12V11H1Z" fill="#5aa0a0"/><rect x="1" y="3" width="11" height="1" fill="#9ad0d0"/><rect x="1" y="11" width="12" height="1" fill="#1a4a4a"/><rect x="12" y="3" width="1" height="9" fill="#1a4a4a"/></g><g transform="translate(26 132)"><path d="M0 2Q0 0.5 1.5 0.5H5L6.5 2H13V12H0Z" fill="#1a4a4a" opacity=".75"/><path d="M1 2.2Q1 1.5 2 1.5H4.7L6.2 3H12V11H1Z" fill="#5aa0a0"/><rect x="1" y="3" width="11" height="1" fill="#9ad0d0"/><rect x="1" y="11" width="12" height="1" fill="#1a4a4a"/><rect x="12" y="3" width="1" height="9" fill="#1a4a4a"/></g><g transform="translate(26 147)"><path d="M0 2Q0 0.5 1.5 0.5H5L6.5 2H13V12H0Z" fill="#1a4a4a" opacity=".75"/><path d="M1 2.2Q1 1.5 2 1.5H4.7L6.2 3H12V11H1Z" fill="#5aa0a0"/><rect x="1" y="3" width="11" height="1" fill="#9ad0d0"/><rect x="1" y="11" width="12" height="1" fill="#1a4a4a"/><rect x="12" y="3" width="1" height="9" fill="#1a4a4a"/></g><g transform="translate(26 161)"><path d="M0 2Q0 0.5 1.5 0.5H5L6.5 2H13V12H0Z" fill="#1a4a4a" opacity=".75"/><path d="M1 2.2Q1 1.5 2 1.5H4.7L6.2 3H12V11H1Z" fill="#5aa0a0"/><rect x="1" y="3" width="11" height="1" fill="#9ad0d0"/><rect x="1" y="11" width="12" height="1" fill="#1a4a4a"/><rect x="12" y="3" width="1" height="9" fill="#1a4a4a"/></g><g transform="translate(26 176)"><path d="M0 2Q0 0.5 1.5 0.5H5L6.5 2H13V12H0Z" fill="#1a4a4a" opacity=".75"/><path d="M1 2.2Q1 1.5 2 1.5H4.7L6.2 3H12V11H1Z" fill="#5aa0a0"/><rect x="1" y="3" width="11" height="1" fill="#9ad0d0"/><rect x="1" y="11" width="12" height="1" fill="#1a4a4a"/><rect x="12" y="3" width="1" height="9" fill="#1a4a4a"/></g><g transform="translate(26 191)"><path d="M0 2Q0 0.5 1.5 0.5H5L6.5 2H13V12H0Z" fill="#1a4a4a" opacity=".75"/><path d="M1 2.2Q1 1.5 2 1.5H4.7L6.2 3H12V11H1Z" fill="#5aa0a0"/><rect x="1" y="3" width="11" height="1" fill="#9ad0d0"/><rect x="1" y="11" width="12" height="1" fill="#1a4a4a"/><rect x="12" y="3" width="1" height="9" fill="#1a4a4a"/></g><g transform="translate(26 205)"><path d="M0 2Q0 0.5 1.5 0.5H5L6.5 2H13V12H0Z" fill="#1a4a4a" opacity=".75"/><path d="M1 2.2Q1 1.5 2 1.5H4.7L6.2 3H12V11H1Z" fill="#5aa0a0"/><rect x="1" y="3" width="11" height="1" fill="#9ad0d0"/><rect x="1" y="11" width="12" height="1" fill="#1a4a4a"/><rect x="12" y="3" width="1" height="9" fill="#1a4a4a"/></g><g transform="translate(26 220)"><path d="M0 2Q0 0.5 1.5 0.5H5L6.5 2H13V12H0Z" fill="#1a4a4a" opacity=".75"/><path d="M1 2.2Q1 1.5 2 1.5H4.7L6.2 3H12V11H1Z" fill="#5aa0a0"/><rect x="1" y="3" width="11" height="1" fill="#9ad0d0"/><rect x="1" y="11" width="12" height="1" fill="#1a4a4a"/><rect x="12" y="3" width="1" height="9" fill="#1a4a4a"/></g><g transform="translate(26 234)"><path d="M0 2Q0 0.5 1.5 0.5H5L6.5 2H13V12H0Z" fill="#55551a" opacity=".75"/><path d="M1 2.2Q1 1.5 2 1.5H4.7L6.2 3H12V11H1Z" fill="#e8e870"/><rect x="1" y="3" width="11" height="1" fill="#f8f8a0"/><rect x="1" y="11" width="12" height="1" fill="#55551a"/><rect x="12" y="3" width="1" height="9" fill="#55551a"/></g><g transform="translate(26 249)"><path d="M0 2Q0 0.5 1.5 0.5H5L6.5 2H13V12H0Z" fill="#55551a" opacity=".75"/><path d="M1 2.2Q1 1.5 2 1.5H4.7L6.2 3H12V11H1Z" fill="#e8e870"/><rect x="1" y="3" width="11" height="1" fill="#f8f8a0"/><rect x="1" y="11" width="12" height="1" fill="#55551a"/><rect x="12" y="3" width="1" height="9" fill="#55551a"/></g><g transform="translate(176 68)"><rect x="0.5" y="0.5" width="11" height="12" rx="1" fill="#e8e6e0" stroke="#222"/><rect x="1" y="3" width="11" height="1" fill="#222"/><rect x="1" y="6" width="11" height="1" fill="#222"/><rect x="1" y="9" width="4" height="1" fill="#222"/><rect x="8" y="9" width="4" height="1" fill="#222"/><rect x="6" y="8" width="1" height="6" fill="#000"/><path d="M4 10L6.5 7L9 10Z" fill="#000" shape-rendering="auto"/></g><g transform="translate(177.5 730.5)"><path d="M5 0.5V7.5L1 4Z" fill="#fff" shape-rendering="auto"/><path d="M4 0V7L0 3.5Z" fill="#808080" shape-rendering="auto"/></g></svg>
<span class="t" style="left:16.5px;top:1.69px;font-size:11px;line-height:11px;color:#fff;letter-spacing:0.02px;font-weight:bold;">Altova XMLSpy - [cte_v1.04]</span>
<span class="t" style="left:33.4px;top:22.69px;font-size:11px;line-height:11px;color:#000;transform:scaleX(0.817);"><u>F</u>ile</span>
<span class="t" style="left:61.7px;top:22.69px;font-size:11px;line-height:11px;color:#000;transform:scaleX(0.849);"><u>E</u>dit</span>
<span class="t" style="left:91.7px;top:22.69px;font-size:11px;line-height:11px;color:#000;transform:scaleX(0.902);"><u>P</u>roject</span>
<span class="t" style="left:136.8px;top:22.69px;font-size:11px;line-height:11px;color:#000;transform:scaleX(0.743);"><u>X</u>ML</span>
<span class="t" style="left:167.8px;top:22.69px;font-size:11px;line-height:11px;color:#000;transform:scaleX(0.845);"><u>D</u>TD/Schema</span>
<span class="t" style="left:237.8px;top:22.69px;font-size:11px;line-height:11px;color:#000;transform:scaleX(0.853);">Sche<u>m</u>a design</span>
<span class="t" style="left:316px;top:22.69px;font-size:11px;line-height:11px;color:#000;transform:scaleX(0.85);">XSL/X<u>Q</u>uery</span>
<span class="t" style="left:381.8px;top:22.69px;font-size:11px;line-height:11px;color:#000;transform:scaleX(0.926);"><u>A</u>uthentic</span>
<span class="t" style="left:438px;top:22.69px;font-size:11px;line-height:11px;color:#000;transform:scaleX(0.908);"><u>C</u>onvert</span>
<span class="t" style="left:487px;top:22.69px;font-size:11px;line-height:11px;color:#000;transform:scaleX(0.858);"><u>V</u>iew</span>
<span class="t" style="left:520.7px;top:22.69px;font-size:11px;line-height:11px;color:#000;transform:scaleX(0.877);"><u>B</u>rowser</span>
<span class="t" style="left:570.5px;top:22.69px;font-size:11px;line-height:11px;color:#000;transform:scaleX(0.78);">W<u>S</u>DL</span>
<span class="t" style="left:609.7px;top:22.69px;font-size:11px;line-height:11px;color:#000;transform:scaleX(0.804);">S<u>O</u>AP</span>
<span class="t" style="left:648px;top:22.69px;font-size:11px;line-height:11px;color:#000;transform:scaleX(0.891);"><u>T</u>ools</span>
<span class="t" style="left:685px;top:22.69px;font-size:11px;line-height:11px;color:#000;transform:scaleX(0.884);"><u>W</u>indow</span>
<span class="t" style="left:733px;top:22.69px;font-size:11px;line-height:11px;color:#000;transform:scaleX(0.844);"><u>H</u>elp</span>
<span class="t" style="left:3px;top:66.69px;font-size:11px;line-height:11px;color:#000;transform:scaleX(0.914);">Project</span>
<span class="t" style="left:28px;top:88.69px;font-size:11px;line-height:11px;color:#000;transform:scaleX(0.94);font-weight:bold;">Examples</span>
<span class="t" style="left:46.2px;top:103.69px;font-size:11px;line-height:11px;color:#000;transform:scaleX(0.836);">Org-Chart</span>
<span class="t" style="left:46.2px;top:118.69px;font-size:11px;line-height:11px;color:#000;transform:scaleX(0.884);">Expense Report</span>
<span class="t" style="left:46.2px;top:132.69px;font-size:11px;line-height:11px;color:#000;transform:scaleX(0.885);">International</span>
<span class="t" style="left:46.2px;top:147.69px;font-size:11px;line-height:11px;color:#000;transform:scaleX(0.873);">Purchase Order</span>
<span class="t" style="left:46.2px;top:161.69px;font-size:11px;line-height:11px;color:#000;transform:scaleX(0.882);">SOAP Debugger</span>
<span class="t" style="left:46.2px;top:176.69px;font-size:11px;line-height:11px;color:#000;transform:scaleX(0.899);">WSDL Editor</span>
<span class="t" style="left:46.2px;top:191.69px;font-size:11px;line-height:11px;color:#000;transform:scaleX(0.87);">IndustryStandards</span>
<span class="t" style="left:46.2px;top:205.69px;font-size:11px;line-height:11px;color:#000;transform:scaleX(0.887);">XML-based Website</span>
<span class="t" style="left:46.2px;top:220.69px;font-size:11px;line-height:11px;color:#000;transform:scaleX(0.905);">Tamino</span>
<span class="t" style="left:46.2px;top:234.69px;font-size:11px;line-height:11px;color:#000;transform:scaleX(0.956);font-weight:bold;">XQuery</span>
<span class="t" style="left:46.2px;top:249.69px;font-size:11px;line-height:11px;color:#000;letter-spacing:0.26px;font-weight:bold;">XSLT2</span>
<span class="t" style="left:187.8px;top:744.19px;font-size:11px;line-height:11px;color:#000;transform:scaleX(0.911);">Text</span>
<span class="t" style="left:240.9px;top:744.19px;font-size:11px;line-height:11px;color:#000;transform:scaleX(0.842);">Grid</span>
<span class="t" style="left:286.3px;top:744.19px;font-size:11px;line-height:11px;color:#000;letter-spacing:0.2px;font-weight:bold;">Schema/WSDL</span>
<span class="t" style="left:389.6px;top:744.19px;font-size:11px;line-height:11px;color:#000;transform:scaleX(0.902);">Authentic</span>
<span class="t" style="left:458.5px;top:744.19px;font-size:11px;line-height:11px;color:#000;transform:scaleX(0.863);">Browser</span>
<span class="t" style="left:193px;top:761.69px;font-size:11px;line-height:11px;color:#000;letter-spacing:0.19px;font-weight:bold;">cte_v1.04</span>
<span class="t" style="left:186.4px;top:620.69px;font-size:11px;line-height:11px;color:#000;transform:scaleX(0.987);font-weight:bold;">CTe</span>
<span class="t" style="left:180.7px;top:636.11px;font-size:10.5px;line-height:10.5px;color:#808080;transform:scaleX(0.947);">type</span>
<span class="t" style="left:207px;top:636.11px;font-size:10.5px;line-height:10.5px;color:#000;transform:scaleX(0.877);">TCTe</span>
<span class="t" style="left:184px;top:656.18px;font-size:9px;line-height:9px;color:#8c8c8c;transform:scaleX(0.93);">Conhecimento de Transporte</span>
<span class="t" style="left:184px;top:666.18px;font-size:9px;line-height:9px;color:#8c8c8c;transform:scaleX(0.887);">Eletrônico</span>
<span class="t" style="left:619.5px;top:601.69px;font-size:11px;line-height:11px;color:#000;transform:scaleX(0.978);font-weight:bold;">infCTeNorm</span>
<span class="t" style="left:617px;top:623.18px;font-size:9px;line-height:9px;color:#8a8a78;transform:scaleX(0.928);">Grupo de informações do</span>
<span class="t" style="left:617px;top:633.18px;font-size:9px;line-height:9px;color:#8a8a78;transform:scaleX(0.957);">CT-e Normal e Substituto</span>
<span class="t" style="left:799px;top:215.69px;font-size:11px;line-height:11px;color:#000;transform:scaleX(0.946);font-weight:bold;">infCarga</span>
<span class="t" style="left:796.3px;top:237.18px;font-size:9px;line-height:9px;color:#8a8a78;transform:scaleX(0.947);">Informações da Carga do</span>
<span class="t" style="left:796.3px;top:247.18px;font-size:9px;line-height:9px;color:#8a8a78;transform:scaleX(0.974);">CT-e</span>
<span class="t" style="left:981px;top:98.69px;font-size:11px;line-height:11px;color:#222;transform:scaleX(0.946);font-weight:bold;">vCarga</span>
<span class="t" style="left:979.2px;top:120.18px;font-size:9px;line-height:9px;color:#8a8a78;transform:scaleX(0.948);">Valor total da carga</span>
<span class="t" style="left:981px;top:149.69px;font-size:11px;line-height:11px;color:#000;transform:scaleX(0.967);font-weight:bold;">proPred</span>
<span class="t" style="left:975.7px;top:165.61px;font-size:10.5px;line-height:10.5px;color:#8c8c8c;transform:scaleX(0.937);">type</span>
<span class="t" style="left:1034px;top:165.61px;font-size:10.5px;line-height:10.5px;color:#2a2a6a;transform:scaleX(0.925);">TString</span>
<span class="t" style="left:975.7px;top:179.31px;font-size:10.5px;line-height:10.5px;color:#8c8c8c;transform:scaleX(0.951);">derivedBy</span>
<span class="t" style="left:1034px;top:179.31px;font-size:10.5px;line-height:10.5px;color:#000;transform:scaleX(0.958);">restriction</span>
<span class="t" style="left:975.7px;top:193.11px;font-size:10.5px;line-height:10.5px;color:#8c8c8c;transform:scaleX(0.902);">min/maxLen</span>
<span class="t" style="left:1034px;top:193.11px;font-size:10.5px;line-height:10.5px;color:#2a2a6a;transform:scaleX(0.65);">1</span>
<span class="t" style="left:1097.6px;top:193.11px;font-size:10.5px;line-height:10.5px;color:#2a2a6a;transform:scaleX(0.984);">60</span>
<span class="t" style="left:975.7px;top:206.61px;font-size:10.5px;line-height:10.5px;color:#8c8c8c;transform:scaleX(0.936);">pattern</span>
<span class="t" style="left:1034px;top:206.61px;font-size:10.5px;line-height:10.5px;color:#000;transform:scaleX(0.962);">[!-ÿ]{1}[ -ÿ]{0,}[!-ÿ]{1}|[!-ÿ]...</span>
<span class="t" style="left:978.3px;top:226.18px;font-size:9px;line-height:9px;color:#8a8a78;transform:scaleX(0.927);">Produto predominante</span>
<span class="t" style="left:981px;top:249.69px;font-size:11px;line-height:11px;color:#000;transform:scaleX(0.919);font-weight:bold;">xOutCat</span>
<span class="t" style="left:975.7px;top:265.61px;font-size:10.5px;line-height:10.5px;color:#8c8c8c;transform:scaleX(0.937);">type</span>
<span class="t" style="left:1034px;top:265.61px;font-size:10.5px;line-height:10.5px;color:#2a2a6a;transform:scaleX(0.925);">TString</span>
<span class="t" style="left:975.7px;top:279.31px;font-size:10.5px;line-height:10.5px;color:#8c8c8c;transform:scaleX(0.951);">derivedBy</span>
<span class="t" style="left:1034px;top:279.31px;font-size:10.5px;line-height:10.5px;color:#000;transform:scaleX(0.958);">restriction</span>
<span class="t" style="left:975.7px;top:293.11px;font-size:10.5px;line-height:10.5px;color:#8c8c8c;transform:scaleX(0.902);">min/maxLen</span>
<span class="t" style="left:1034px;top:293.11px;font-size:10.5px;line-height:10.5px;color:#2a2a6a;transform:scaleX(0.65);">1</span>
<span class="t" style="left:1097.6px;top:293.11px;font-size:10.5px;line-height:10.5px;color:#2a2a6a;transform:scaleX(0.984);">30</span>
<span class="t" style="left:975.7px;top:306.61px;font-size:10.5px;line-height:10.5px;color:#8c8c8c;transform:scaleX(0.936);">pattern</span>
<span class="t" style="left:1034px;top:306.61px;font-size:10.5px;line-height:10.5px;color:#000;transform:scaleX(0.962);">[!-ÿ]{1}[ -ÿ]{0,}[!-ÿ]{1}|[!-ÿ]...</span>
<span class="t" style="left:978.3px;top:326.18px;font-size:9px;line-height:9px;color:#8a8a78;transform:scaleX(0.916);">Outras características da carga</span>
<span class="t" style="left:981px;top:349.69px;font-size:11px;line-height:11px;color:#000;transform:scaleX(0.9);font-weight:bold;">infQ</span>
<span class="t" style="left:998px;top:370.19px;font-size:11px;line-height:11px;color:#000;transform:scaleX(0.911);">1..∞</span>
<span class="t" style="left:978.3px;top:383.78px;font-size:9px;line-height:9px;color:#8a8a78;transform:scaleX(0.932);">Informações de quantidades</span>
<span class="t" style="left:978.3px;top:393.68px;font-size:9px;line-height:9px;color:#8a8a78;transform:scaleX(0.962);">da Carga do CT-e</span>
<span class="t" style="left:796.8px;top:420.19px;font-size:11px;line-height:11px;color:#222;transform:scaleX(0.928);font-weight:bold;">contQt</span>
<span class="t" style="left:817.7px;top:441.19px;font-size:11px;line-height:11px;color:#000;transform:scaleX(0.916);">0..∞</span>
<span class="t" style="left:794.4px;top:454.78px;font-size:9px;line-height:9px;color:#8a8a78;transform:scaleX(0.929);">Informações dos</span>
<span class="t" style="left:794.4px;top:464.68px;font-size:9px;line-height:9px;color:#8a8a78;transform:scaleX(0.907);">containeres/ULD</span>
<span class="t" style="left:796.8px;top:488.19px;font-size:11px;line-height:11px;color:#222;transform:scaleX(0.94);font-weight:bold;">docAnt</span>
<span class="t" style="left:794.3px;top:509.48px;font-size:9px;line-height:9px;color:#8a8a78;transform:scaleX(0.929);">Documentos de Transporte</span>
<span class="t" style="left:794.3px;top:519.38px;font-size:9px;line-height:9px;color:#8a8a78;transform:scaleX(0.939);">Anterior</span>
<span class="t" style="left:796.8px;top:543.19px;font-size:11px;line-height:11px;color:#222;letter-spacing:0.08px;font-weight:bold;">seg</span>
<span class="t" style="left:813.5px;top:564.19px;font-size:11px;line-height:11px;color:#000;transform:scaleX(0.877);">0..∞</span>
<span class="t" style="left:794.3px;top:577.18px;font-size:9px;line-height:9px;color:#8a8a78;transform:scaleX(0.936);">Informações de Seguro da</span>
<span class="t" style="left:794.3px;top:587.18px;font-size:9px;line-height:9px;color:#8a8a78;transform:scaleX(0.914);">Carga</span>
<span class="t" style="left:796.6px;top:625.19px;font-size:11px;line-height:11px;color:#111;transform:scaleX(0.953);font-weight:bold;">infModal</span>
<span class="t" style="left:924.3px;top:610.69px;font-size:11px;line-height:11px;color:#000;transform:scaleX(0.95);font-style:italic;">attributes</span>
<span class="t" style="left:961.2px;top:640.11px;font-size:10.5px;line-height:10.5px;color:#8c8c8c;transform:scaleX(0.903);">any</span>
<span class="t" style="left:793.9px;top:646.48px;font-size:9px;line-height:9px;color:#8a8a78;transform:scaleX(0.951);">Informações do modal</span>
<span class="t" style="left:960.3px;top:661.18px;font-size:9px;line-height:9px;color:#8a8a78;transform:scaleX(0.931);">XML do modal</span>
<span class="t" style="left:960.3px;top:671.23px;font-size:9px;line-height:9px;color:#8a8a78;transform:scaleX(0.922);">Insira neste local o XML</span>
<span class="t" style="left:960.3px;top:681.28px;font-size:9px;line-height:9px;color:#8a8a78;transform:scaleX(0.917);">específico do modal</span>
<span class="t" style="left:960.3px;top:691.33px;font-size:9px;line-height:9px;color:#8a8a78;transform:scaleX(0.936);">(rodoviário, aéreo,</span>
<span class="t" style="left:960.3px;top:701.38px;font-size:9px;line-height:9px;color:#8a8a78;transform:scaleX(0.959);">ferroviário, aquaviário ou</span>
<span class="t" style="left:960.3px;top:711.43px;font-size:9px;line-height:9px;color:#8a8a78;transform:scaleX(0.957);">dutoviário).</span>
</div>
</body></html>
